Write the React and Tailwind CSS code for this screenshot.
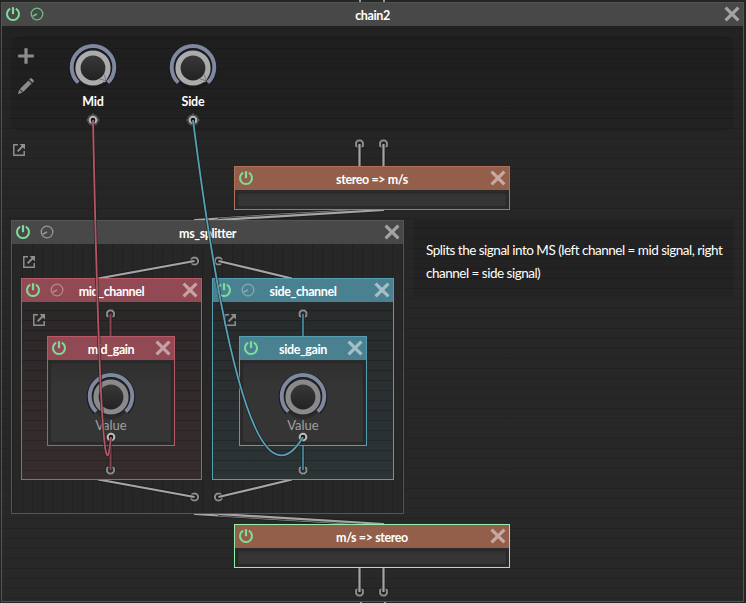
import React from "react";

const Power = () => (
  <svg width="16" height="16" viewBox="0 0 16 16" fill="none" stroke="#7fdb98" strokeWidth="2">
    <path d="M5.2 2.7A6 6 0 1 0 10.8 2.7" />
    <path d="M8 1.2V8.2" strokeWidth="2.2" />
  </svg>
);

const Dial = ({ color }) => (
  <svg width="14" height="14" viewBox="0 0 14 14" fill="none" stroke={color} strokeWidth="1.3">
    <circle cx="7" cy="7" r="5.8" />
    <path d="M7 7L2.6 9.2" strokeWidth="1.6" />
  </svg>
);

const Close = ({ color }) => (
  <svg width="16" height="16" viewBox="0 0 16 16" stroke={color} strokeWidth="3.2">
    <path d="M1.6 1.6L14.4 14.4M14.4 1.6L1.6 14.4" />
  </svg>
);

const Popout = () => (
  <svg className="block" width="14" height="14" viewBox="0 0 14 14" fill="none" stroke="#8f8f8f" strokeWidth="1.5">
    <path d="M6 1.8H1.8V12.2H12.2V8" />
    <path d="M5.6 8.4L11 3" strokeWidth="2" />
    <path d="M7.6 1H13V6.4Z" fill="#8f8f8f" stroke="none" />
  </svg>
);

function Knob({ ring, notch }) {
  return (
    <svg className="block" width="52" height="52" viewBox="0 0 52 52" fill="none">
      <defs>
        <linearGradient id="cap" x1="0" y1="0" x2="0" y2="1">
          <stop offset="0" stopColor="#3b3b3b" />
          <stop offset="1" stopColor="#202020" />
        </linearGradient>
      </defs>
      <circle cx="26" cy="28" r="20" fill="#000" opacity="0.18" />
      <path d="M10.8 41.2A21.5 21.5 0 1 1 41.2 41.2" stroke="#171a20" strokeWidth="5.6" />
      <path d="M11.3 40.7A21.3 21.3 0 1 1 40.7 40.7" stroke="#7f889f" strokeWidth="3.9" />
      <circle cx="26" cy="26" r="18.6" fill="#1d1f23" />
      <circle cx="26" cy="26" r="15" fill="url(#cap)" stroke={ring} strokeWidth="5.2" />
      {notch && <path d="M38.8 29L37.2 33L38.8 38.6L33 37L29 38.6L38 40.2L40.2 37Z" fill={ring} />}
      {notch && <path d="M37.4 32.6L39 38.8L33 37" stroke="#6a6a6a" strokeWidth="0.8" />}
    </svg>
  );
}

function Header({ title, bg, dial, close, side = "w-12" }) {
  return (
    <div className={`flex h-[23px] shrink-0 items-center ${bg}`}>
      <div className={`flex shrink-0 items-center gap-[9px] pb-px pl-[3px] ${side}`}>
        <Power />
        {dial && <Dial color={dial} />}
      </div>
      <div className="min-w-0 flex-1 pt-[3px] text-center text-[12.5px] leading-none font-bold tracking-[-0.4px] whitespace-nowrap text-white">
        {title}
      </div>
      <div className={`flex shrink-0 justify-end pr-[3px] pb-px ${side}`}>
        <Close color={close} />
      </div>
    </div>
  );
}

const Inset = ({ children }) => (
  <div className="flex-1 bg-[#2b2b2b] p-[2px]">
    <div className="flex h-full flex-col items-center border border-[#272727] bg-linear-to-b from-[#2f2f2f] to-[#353535] to-30%">
      {children}
    </div>
  </div>
);

function Converter({ title, border }) {
  return (
    <div className={`flex h-[44px] w-[276px] flex-col border ${border}`}>
      <Header title={title} bg="bg-[#935f4a]" close="#c4aaa1" />
      <Inset />
    </div>
  );
}

function Gain({ title, border, bg, close }) {
  return (
    <div className={`flex h-[110px] w-[128px] flex-col border ${border}`}>
      <Header title={title} bg={bg} close={close} side="w-8" />
      <Inset>
        <div className="mt-[8px]">
          <Knob ring="#8a8a8a" />
        </div>
        <div className="-mt-[5px] text-[13px] leading-[15px] text-[#a0a0a0]">Value</div>
      </Inset>
    </div>
  );
}

function Channel({ title, gain, width, indent, border, bg, body, dial, close, inset }) {
  return (
    <div className={`flex h-[202px] flex-col border ${width} ${border}`}>
      <Header title={title} bg={bg} dial={dial} close={close} />
      <div
        className={`flex-1 bg-[repeating-linear-gradient(to_bottom,transparent_0px,transparent_8px,rgba(0,0,0,0.25)_8px,rgba(0,0,0,0.25)_9px,transparent_9px,transparent_10px)] ${body}`}
      >
        <div className={`h-full bg-linear-to-b ${inset}`}>
          <div className="pt-[11px] pl-[10px]">
            <Popout />
          </div>
          <div className={`mt-[9px] ${indent}`}>
            <Gain title={gain} border={border} bg={bg} close={close} />
          </div>
        </div>
      </div>
    </div>
  );
}

const Param = ({ name }) => (
  <div className="flex w-[100px] flex-col items-center pt-[6px]">
    <Knob ring="#ababab" notch />
    <div className="text-[12.5px] leading-[15px] font-bold tracking-[-0.2px] text-white">{name}</div>
  </div>
);

const Wire = ({ d, color = "#a5a5a5" }) => (
  <>
    <path d={d} stroke="#1c1c1c" strokeWidth="4" strokeOpacity="0.8" />
    <path d={d} stroke={color} strokeWidth="2.2" />
  </>
);

const Plug = ({ x, y, color = "#8c8c8c" }) => (
  <>
    <circle cx={x} cy={y} r="3.7" stroke="#1c1c1c" strokeWidth="3.2" />
    <circle cx={x} cy={y} r="3.6" stroke={color} strokeWidth="2" />
  </>
);

// Half-open socket; dir = 1 opens downwards, dir = -1 opens upwards.
const Socket = ({ x, y, dir }) => {
  const d = `M${x - 1.6} ${y + 2.9 * dir}L${x - 3.4} ${y + 2 * dir}V${y - 1.6 * dir}L${x - 1.6} ${y - 3.5 * dir}H${x + 1.6}L${x + 3.4} ${y - 1.6 * dir}V${y + 2 * dir}L${x + 1.6} ${y + 2.9 * dir}`;
  return (
    <>
      <path d={d} stroke="#1c1c1c" strokeWidth="3.2" />
      <path d={d} stroke="#8c8c8c" strokeWidth="2" />
    </>
  );
};

const ParamPlug = ({ x, y }) => (
  <>
    <circle cx={x} cy={y} r="5.2" stroke="#555" strokeWidth="1.3" />
    <path d={`M${x - 7} ${y}h14M${x} ${y - 7}v14`} stroke="#555" strokeWidth="1.2" />
    <circle cx={x} cy={y} r="3.3" fill="#161616" stroke="#b8b8b8" strokeWidth="2" />
  </>
);

function Cables() {
  return (
    <svg className="pointer-events-none absolute inset-0" width="746" height="603" viewBox="0 0 746 603" fill="none">
      <defs>
        <clipPath id="upper"><rect x="190" y="210" width="220" height="10" /></clipPath>
        <clipPath id="lower"><rect x="190" y="514" width="220" height="10" /></clipPath>
        <clipPath id="fanIn"><rect x="90" y="245" width="220" height="33" /></clipPath>
        <clipPath id="fanOut"><rect x="90" y="480" width="220" height="33" /></clipPath>
      </defs>
      <path d="M360 0V2M384 0V2M361 602V603M385 602V603" stroke="#9a9a9a" strokeWidth="2" />

      <Socket x={359.5} y={144} dir={1} />
      <Socket x={383.5} y={144} dir={1} />
      <Wire d="M359.5 144V166" />
      <Wire d="M383.5 144V166" />
      <Socket x={359.5} y={592} dir={-1} />
      <Socket x={383.5} y={592} dir={-1} />
      <Wire d="M359.5 568V592" />
      <Wire d="M383.5 568V592" />

      <g clipPath="url(#upper)">
        <Wire d="M360 210L194 220" />
        <Wire d="M384 210L218 220" />
      </g>
      <g clipPath="url(#lower)">
        <Wire d="M194 514L360 524" />
        <Wire d="M218 514L384 524" />
      </g>

      <Plug x={194.5} y={261} />
      <Plug x={218.5} y={261} />
      <g clipPath="url(#fanIn)">
        <Wire d="M194.5 261L98 278.5" />
        <Wire d="M218.5 261L292 278.5" />
      </g>
      <Plug x={194.5} y={497} />
      <Plug x={218.5} y={497} />
      <g clipPath="url(#fanOut)">
        <Wire d="M98 479.5L194.5 497" />
        <Wire d="M292 479.5L218.5 497" />
      </g>

      <Socket x={110.5} y={314} dir={1} />
      <Wire d="M110.5 314V336" color="#85414c" />
      <Socket x={110.5} y={470} dir={-1} />
      <Wire d="M110.5 446V470" color="#85414c" />
      <Socket x={303} y={314} dir={1} />
      <Wire d="M303 314V336" color="#417c8e" />
      <Socket x={303} y={470} dir={-1} />
      <Wire d="M303 446V470" color="#417c8e" />

      <ParamPlug x={93} y={120} />
      <ParamPlug x={193} y={120} />
      <circle cx="111" cy="437" r="3.3" fill="#161616" stroke="#bdbdbd" strokeWidth="2" />
      <circle cx="303" cy="437" r="3.3" fill="#161616" stroke="#bdbdbd" strokeWidth="2" />

      <path d="M93 120Q101.5 534 111 437" stroke="#1a1a1a" strokeWidth="3.2" strokeOpacity="0.75" />
      <path d="M93 120Q101.5 534 111 437" stroke="#b65565" strokeWidth="1.8" />
      <path d="M193 120Q245.5 534 303 437" stroke="#1a1a1a" strokeWidth="3.2" strokeOpacity="0.75" />
      <path d="M193 120Q245.5 534 303 437" stroke="#57a2b8" strokeWidth="1.8" />
    </svg>
  );
}

export default function App() {
  return (
    <div className="relative h-[603px] w-[746px] overflow-hidden bg-[#222725] pt-[2px] pl-px font-['Lato',sans-serif]">
      <div className="flex h-[600px] w-[743px] flex-col border border-[#505350] bg-[#282828]">
        <Header title="chain2" bg="bg-[#484848]" dial="#6bc085" close="#a3a3a3" />
        <div className="flex-1 bg-[repeating-linear-gradient(to_bottom,transparent_0px,transparent_2px,rgba(0,0,0,0.13)_2px,rgba(0,0,0,0.13)_3px,transparent_3px,transparent_10px)]">
          <div className="flex h-full flex-col bg-linear-to-b from-black/15 via-black/5 via-25% to-transparent px-[9px] pt-[10px]">
            <div className="flex h-[95px] w-[723px] shrink-0 rounded-[10px] bg-black/10">
              <div className="flex w-[32px] flex-col items-end gap-[14px] pt-[12px] pr-[9px]">
                <svg width="16" height="16" viewBox="0 0 16 16" stroke="#8c8c8c" strokeWidth="3.2">
                  <path d="M8 .2V15.8M.2 8H15.8" />
                </svg>
                <svg width="16" height="16" viewBox="0 0 16 16" fill="#8c8c8c">
                  <path d="M0 16L1.2 11.6L4.4 14.8ZM1.9 10.9L10.4 2.4L13.6 5.6L5.1 14.1ZM11.2 1.6L12.6.3Q13.2-.1 13.8.4L15.6 2.2Q16.1 2.8 15.7 3.4L14.4 4.8Z" />
                </svg>
              </div>
              <Param name="Mid" />
              <Param name="Side" />
            </div>
            <div className="mt-[12px] h-[14px] pl-px">
              <Popout />
            </div>
            <div className="mt-[9px] pl-[223px]">
              <Converter title="stereo => m/s" border="border-[#b0705a]" />
            </div>
            <div className="mt-[10px] flex gap-[10px]">
              <div className="flex h-[294px] w-[393px] shrink-0 flex-col border border-[#555]">
                <Header title="ms_splitter" bg="bg-[#484848]" dial="#969696" close="#a3a3a3" />
                <div className="flex-1 bg-[#272727] bg-[repeating-linear-gradient(to_right,rgba(0,0,0,0.15)_0px,rgba(0,0,0,0.15)_1px,transparent_1px,transparent_10px)] px-[9px]">
                  <div className="pt-[11px] pl-px">
                    <Popout />
                  </div>
                  <div className="mt-[9px] flex gap-[10px]">
                    <Channel
                      title="mid_channel"
                      gain="mid_gain"
                      width="w-[181px]"
                      indent="pl-[25px]"
                      border="border-[#b65a67]"
                      bg="bg-[#914a54]"
                      body="bg-[#282727]"
                      inset="from-[#b65a67]/2 to-[#b65a67]/10"
                      dial="#b8878d"
                      close="#c6a0a5"
                    />
                    <Channel
                      title="side_channel"
                      gain="side_gain"
                      width="w-[182px]"
                      indent="pl-[26px]"
                      border="border-[#559db1]"
                      bg="bg-[#4a8191]"
                      body="bg-[#272828]"
                      inset="from-[#559db1]/2 to-[#559db1]/10"
                      dial="#86a9b3"
                      close="#a5bfc7"
                    />
                  </div>
                </div>
              </div>
              <div className="h-[77px] w-[320px] bg-black/10 pt-[19px] pl-[12px] text-[13.5px] leading-[23px] tracking-[-0.5px] whitespace-nowrap text-white">
                Splits the signal into MS (left channel = mid signal, right
                <br />
                channel = side signal)
              </div>
            </div>
            <div className="mt-[10px] pl-[223px]">
              <Converter title="m/s => stereo" border="border-[#8ef0ab]" />
            </div>
          </div>
        </div>
      </div>
      <Cables />
    </div>
  );
}
